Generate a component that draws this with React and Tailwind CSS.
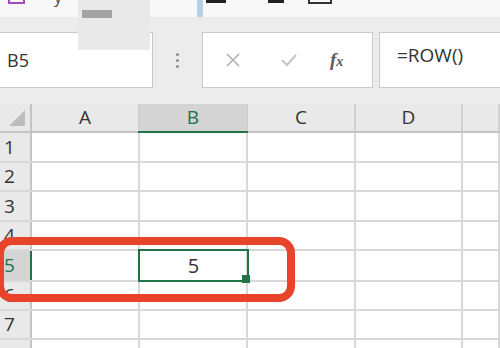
import React from "react";

const font = { fontFamily: '"Open Sans", "Noto Sans", "Liberation Sans", sans-serif' };

const colW = ["w-[108px]", "w-[108px]", "w-[108px]", "w-[107px]", "flex-1"];
const cols = ["A", "B", "C", "D", ""];
const rowH = ["h-[30px]", "h-[29px]", "h-[30px]", "h-[29px]", "h-[31px]", "h-[29px]", "h-[29px]", "h-[30px]"];

function HeaderRow() {
  return (
    <div className="flex h-[29px] bg-[#e9e9e9] border-b-2 border-[#c4c4c4]">
      <div className="w-[32px] shrink-0 border-r-2 border-[#c4c4c4] flex items-end justify-end pr-[4px] pb-[4px]">
        <svg width="18" height="18" viewBox="0 0 18 18">
          <polygon points="17,1 17,17 1,17" fill="#bdbdbd" />
        </svg>
      </div>
      {cols.map((c, i) => (
        <div
          key={i}
          className={`${colW[i]} shrink-0 border-r-2 border-[#d0d0d0] flex items-center justify-center text-[19px] ${
            c === "B" ? "bg-[#d4d4d4] text-[#217346] relative" : "text-[#333]"
          }`}
        >
          {c}
          {c === "B" && <div className="absolute left-[-2px] right-[-2px] bottom-[-2px] h-[2px] bg-[#217346]" />}
        </div>
      ))}
    </div>
  );
}

function Row({ n }) {
  const sel = n === 5;
  return (
    <div className={`flex ${rowH[n - 1]} border-b-2 border-[#d8d8d8] bg-white ${sel ? "relative z-10" : ""}`}>
      <div
        className={`w-[32px] shrink-0 border-r-2 flex items-center pl-[4px] text-[19px] ${
          sel ? "bg-[#d4d4d4] text-[#217346] border-[#217346]" : "bg-[#e9e9e9] text-[#333] border-[#c4c4c4]"
        }`}
      >
        {n}
      </div>
      {cols.map((c, i) => (
        <div key={i} className={`${colW[i]} shrink-0 border-r-2 border-[#d8d8d8] relative`}>
          {sel && c === "B" && (
            <div className="absolute left-[-2px] top-[-2px] right-[-3px] bottom-[-2px] border-2 border-[#217346] flex items-center justify-center text-[20px] text-[#333]">
              5
              <div className="absolute right-[-3px] bottom-[-3px] w-[8px] h-[8px] bg-[#217346]" />
            </div>
          )}
        </div>
      ))}
    </div>
  );
}

export default function App() {
  return (
    <div className="w-[500px] h-[348px] overflow-hidden relative bg-[#efefef]" style={font}>
      {/* top toolbar strip */}
      <div className="h-[17px] bg-[#f8f8f8] flex items-start overflow-hidden">
        <div className="ml-[8px] w-[17px] h-[4px] border-2 border-t-0 border-[#a04cc0]" />
        <div className="ml-[29px] mt-[-12px] text-[16px] leading-[18px] text-[#444]">y</div>
        <div className="ml-[135px] w-[6px] h-[17px] bg-[#b4cfe4]" />
        <div className="ml-[3px] w-[20px] h-[3px] bg-[#222]" />
        <div className="ml-[42px] w-[16px] h-[3px] bg-[#222]" />
        <div className="ml-[24px] w-[24px] h-[4px] border-2 border-t-0 border-[#333]" />
      </div>
      {/* formula bar */}
      <div className="h-[87px] bg-[#ececec] flex pt-[15px] pb-[15px]">
        <div className="w-[153px] h-[56px] bg-white border border-[#c9c9c9] border-l-0 flex items-center pl-[7px] text-[18px] text-[#333]">
          B5
        </div>
        <div className="w-[49px] flex flex-col items-center justify-center gap-[3px]">
          <div className="w-[3px] h-[3px] rounded-full bg-[#8c8c8c]" />
          <div className="w-[3px] h-[3px] rounded-full bg-[#8c8c8c]" />
          <div className="w-[3px] h-[3px] rounded-full bg-[#8c8c8c]" />
        </div>
        <div className="w-[171px] h-[56px] bg-white border border-[#c9c9c9] flex items-center">
          <svg className="ml-[22px]" width="16" height="16" viewBox="0 0 16 16">
            <path d="M2 2 L14 14 M14 2 L2 14" stroke="#b0b0b0" strokeWidth="1.6" />
          </svg>
          <svg className="ml-[39px]" width="18" height="16" viewBox="0 0 18 16">
            <path d="M2 8 L7 13 L16 3" stroke="#c4c4c4" strokeWidth="2" fill="none" />
          </svg>
          <span
            className="ml-[32px] text-[19px] italic font-bold text-[#5a5a5a]"
            style={{ fontFamily: '"Liberation Serif", serif' }}
          >
            f<span className="text-[14px]">x</span>
          </span>
        </div>
        <div className="ml-[6px] flex-1 h-[56px] bg-white border border-[#c9c9c9] border-r-0 flex items-start pt-[8px] pl-[17px] text-[19px] text-[#333]">
          =ROW()
        </div>
      </div>
      {/* grid */}
      <HeaderRow />
      {[1, 2, 3, 4, 5, 6, 7, 8].map((n) => (
        <Row key={n} n={n} />
      ))}
      {/* blurred overlay */}
      <div className="absolute left-[78px] top-0 w-[72px] h-[50px] bg-[#e9e9e9]">
        <div className="ml-[4px] mt-[10px] w-[30px] h-[8px] bg-[#a3a3a3]" />
      </div>
      {/* red annotation */}
      <div className="absolute z-20 left-[-4px] top-[237px] w-[299px] h-[65px] border-[8px] border-[#e8432b] rounded-[16px]" />
    </div>
  );
}
